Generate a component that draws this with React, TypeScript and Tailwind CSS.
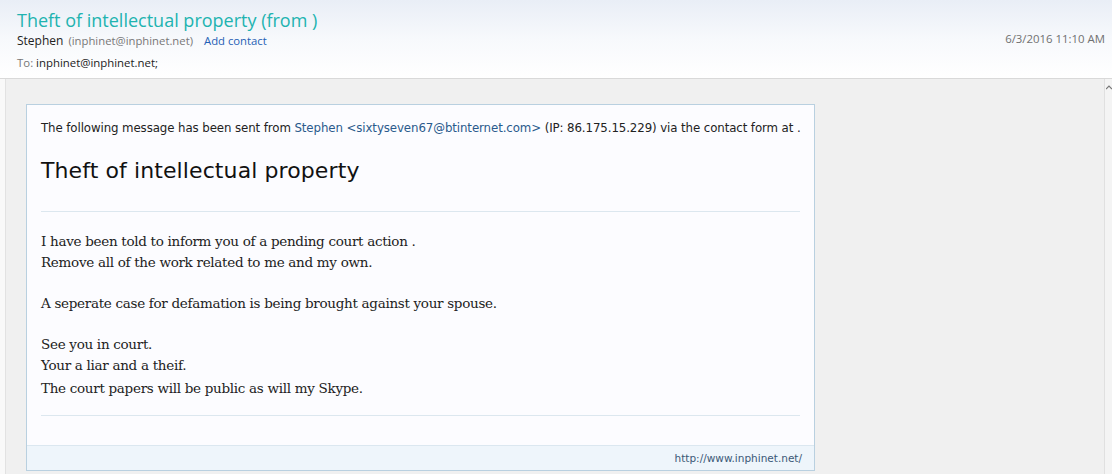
export default function App() {
  return (
    <div className="flex h-[474px] w-[1112px] flex-col overflow-hidden bg-white font-['Open_Sans',sans-serif]">
      {/* Header */}
      <div className="relative h-[79px] shrink-0 border-b border-[#d9d9d9] bg-gradient-to-b from-[#e9eef6] via-[#f7f9fc] to-white px-[17px] pt-[7px]">
        <div className="text-[18px] leading-[26px] text-[#21b3b0]">
          Theft of intellectual property (from )
        </div>
        <div className="flex items-center text-[12px] leading-[16px]">
          <span className="text-[#222]">Stephen</span>
          <span className="ml-[5px] text-[11.3px] text-[#777]">(inphinet@inphinet.net)</span>
          <span className="ml-[11px] text-[11.3px] text-[#1f5fb5]">Add contact</span>
        </div>
        <div className="mt-[6px] text-[11.4px] leading-[16px] text-[#222]">
          <span className="text-[#777]">To:</span> inphinet@inphinet.net;
        </div>
        <div className="absolute right-[7px] top-[31px] text-[11.4px] leading-[16px] text-[#707070]">
          6/3/2016 11:10 AM
        </div>
      </div>

      {/* Body */}
      <div className="flex min-h-0 flex-1">
        <div className="w-[6px] shrink-0 border-r border-[#e2e2e2] bg-[#f9f9f9]" />
        <div className="flex-1 bg-[#f0f0f0] pl-[20px] pt-[25px]">
          <div className="w-[789px] border border-[#b9d0e0] bg-[#fcfcff] font-['DejaVu_Sans',sans-serif]">
            <div className="px-[14px] pt-[15px]">
              <p className="whitespace-nowrap text-[11.8px] leading-[16px] tracking-[-0.1px] text-[#222]">
                The following message has been sent from{" "}
                <span className="text-[#2a5a8c]">Stephen &lt;sixtyseven67@btinternet.com&gt;</span>{" "}
                (IP: 86.175.15.229) via the contact form at .
              </p>
              <h1 className="mt-[21px] text-[22px] leading-[28px] tracking-[0.1px] text-[#111]">
                Theft of intellectual property
              </h1>
              <div className="mt-[26px] border-t border-[#dce7ef]" />
              <div className="pt-[19px] pb-[16px] font-['DejaVu_Serif',serif] text-[13.5px] leading-[21px] tracking-[-0.3px] text-[#222]">
                <p>I have been told to inform you of a pending court action .</p>
                <p>Remove all of the work related to me and my own.</p>
                <p className="mt-[20px]">A seperate case for defamation is being brought against your spouse.</p>
                <p className="mt-[20px]">See you in court.</p>
                <p>Your a liar and a theif.</p>
                <p className="mt-[2px]">The court papers will be public as will my Skype.</p>
              </div>
              <div className="border-t border-[#dce7ef]" />
            </div>
            <div className="mt-[29px] border-t border-[#dbe7f0] bg-[#eef5fb] px-[12px] py-[5px] text-right text-[10.5px] leading-[14px] text-[#3b5877]">
              http://www.inphinet.net/
            </div>
          </div>
        </div>
        {/* Scrollbar */}
        <div className="relative w-[8px] shrink-0 border-l border-[#e0e0e0] bg-[#f4f4f4]">
          <svg className="absolute left-[1px] top-[6px]" width="6" height="5" viewBox="0 0 6 5">
            <path d="M0 4 L3 1 L6 4" fill="none" stroke="#777" strokeWidth="1.2" />
          </svg>
        </div>
      </div>
    </div>
  );
}
